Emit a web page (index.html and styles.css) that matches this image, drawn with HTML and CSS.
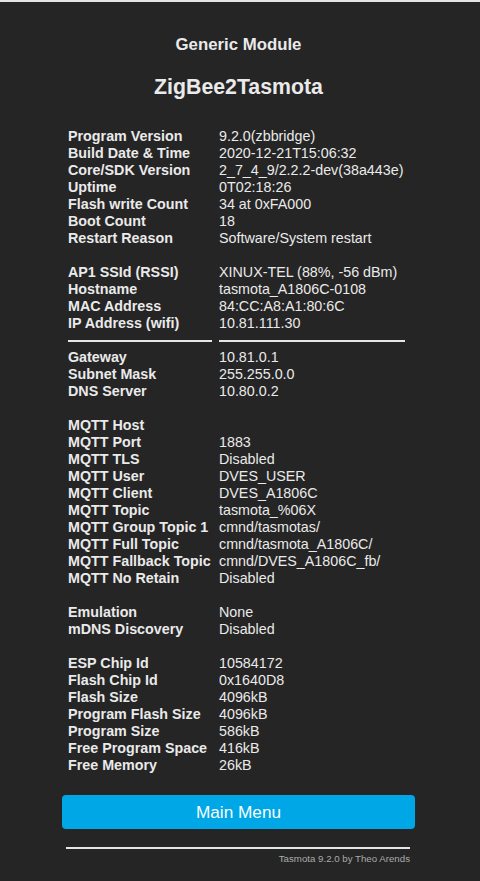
FILE: index.html
```
<!DOCTYPE html>
<html lang="en">
<head>
    <meta charset="UTF-8">
    <meta name="viewport" content="width=device-width, initial-scale=1.0">
    <title>ZigBee2Tasmota - Information</title>
    <link rel="stylesheet" href="styles.css">
</head>
<body>
    <div class="topline"></div>
    <div class="main">
        <div class="header">
            <h3>Generic Module</h3>
            <h2>ZigBee2Tasmota</h2>
        </div>

        <table class="info">
            <tr><th>Program Version</th><td>9.2.0(zbbridge)</td></tr>
            <tr><th>Build Date &amp; Time</th><td>2020-12-21T15:06:32</td></tr>
            <tr><th>Core/SDK Version</th><td>2_7_4_9/2.2.2-dev(38a443e)</td></tr>
            <tr><th>Uptime</th><td>0T02:18:26</td></tr>
            <tr><th>Flash write Count</th><td>34 at 0xFA000</td></tr>
            <tr><th>Boot Count</th><td>18</td></tr>
            <tr><th>Restart Reason</th><td>Software/System restart</td></tr>
            <tr><th>&nbsp;</th><td></td></tr>
            <tr><th>AP1 SSId (RSSI)</th><td>XINUX-TEL (88%, -56 dBm)</td></tr>
            <tr><th>Hostname</th><td>tasmota_A1806C-0108</td></tr>
            <tr><th>MAC Address</th><td>84:CC:A8:A1:80:6C</td></tr>
            <tr><th>IP Address (wifi)</th><td>10.81.111.30</td></tr>
            <tr class="sep"><th><hr></th><td><hr></td></tr>
            <tr><th>Gateway</th><td>10.81.0.1</td></tr>
            <tr><th>Subnet Mask</th><td>255.255.0.0</td></tr>
            <tr><th>DNS Server</th><td>10.80.0.2</td></tr>
            <tr><th>&nbsp;</th><td></td></tr>
            <tr><th>MQTT Host</th><td></td></tr>
            <tr><th>MQTT Port</th><td>1883</td></tr>
            <tr><th>MQTT TLS</th><td>Disabled</td></tr>
            <tr><th>MQTT User</th><td>DVES_USER</td></tr>
            <tr><th>MQTT Client</th><td>DVES_A1806C</td></tr>
            <tr><th>MQTT Topic</th><td>tasmota_%06X</td></tr>
            <tr><th>MQTT Group Topic 1</th><td>cmnd/tasmotas/</td></tr>
            <tr><th>MQTT Full Topic</th><td>cmnd/tasmota_A1806C/</td></tr>
            <tr><th>MQTT Fallback Topic</th><td>cmnd/DVES_A1806C_fb/</td></tr>
            <tr><th>MQTT No Retain</th><td>Disabled</td></tr>
            <tr><th>&nbsp;</th><td></td></tr>
            <tr><th>Emulation</th><td>None</td></tr>
            <tr><th>mDNS Discovery</th><td>Disabled</td></tr>
            <tr><th>&nbsp;</th><td></td></tr>
            <tr><th>ESP Chip Id</th><td>10584172</td></tr>
            <tr><th>Flash Chip Id</th><td>0x1640D8</td></tr>
            <tr><th>Flash Size</th><td>4096kB</td></tr>
            <tr><th>Program Flash Size</th><td>4096kB</td></tr>
            <tr><th>Program Size</th><td>586kB</td></tr>
            <tr><th>Free Program Space</th><td>416kB</td></tr>
            <tr><th>Free Memory</th><td>26kB</td></tr>
        </table>

        <button class="menu-btn">Main Menu</button>

        <div class="footer">
            <hr>
            <div class="credit">Tasmota 9.2.0 by Theo Arends</div>
        </div>
    </div>
</body>
</html>
```

FILE: styles.css
```
html, body {
    margin: 0;
    padding: 0;
    background: #252525;
}
body {
    font-family: "Liberation Sans", Arial, sans-serif;
    color: #eaeaea;
    height: 881px;
    overflow: hidden;
}
.topline {
    height: 2px;
    background: #e4e4e4;
}
.main {
    width: 353px;
    margin: 0 auto;
    padding-right: 3px;
}
.header {
    text-align: center;
    padding-top: 33px;
}
.header h3 {
    font-size: 16.8px;
    line-height: 20px;
    margin: 0;
}
.header h2 {
    font-size: 21.3px;
    line-height: 24px;
    margin: 20px 0 0;
}
.info {
    width: 100%;
    border-collapse: collapse;
    margin-top: 29px;
    font-size: 14.3px;
}
.info th, .info td {
    padding: 0;
    line-height: 17px;
    height: 17px;
    white-space: nowrap;
    vertical-align: middle;
}
.info th {
    text-align: left;
    font-weight: bold;
    width: 144px;
    padding: 0 7px 0 6px;
}
.info td {
    padding-right: 10px;
}
.info hr {
    margin: 0;
    border: none;
    height: 2px;
    background: #e6e6e6;
}
.menu-btn {
    display: block;
    width: 353px;
    height: 34px;
    margin-top: 21px;
    border: none;
    border-radius: 4px;
    background: #00a7e6;
    color: #fafdff;
    font-family: "Liberation Sans", Arial, sans-serif;
    font-size: 17.2px;
    line-height: 34px;
    padding: 0;
    cursor: pointer;
}
.footer {
    padding: 0 5px 0 4px;
}
.footer hr {
    margin: 18px 0 0;
    border: none;
    height: 2px;
    background: #e6e6e6;
}
.credit {
    text-align: right;
    font-size: 9.7px;
    color: #aaaaaa;
    margin-top: 4px;
}
```
